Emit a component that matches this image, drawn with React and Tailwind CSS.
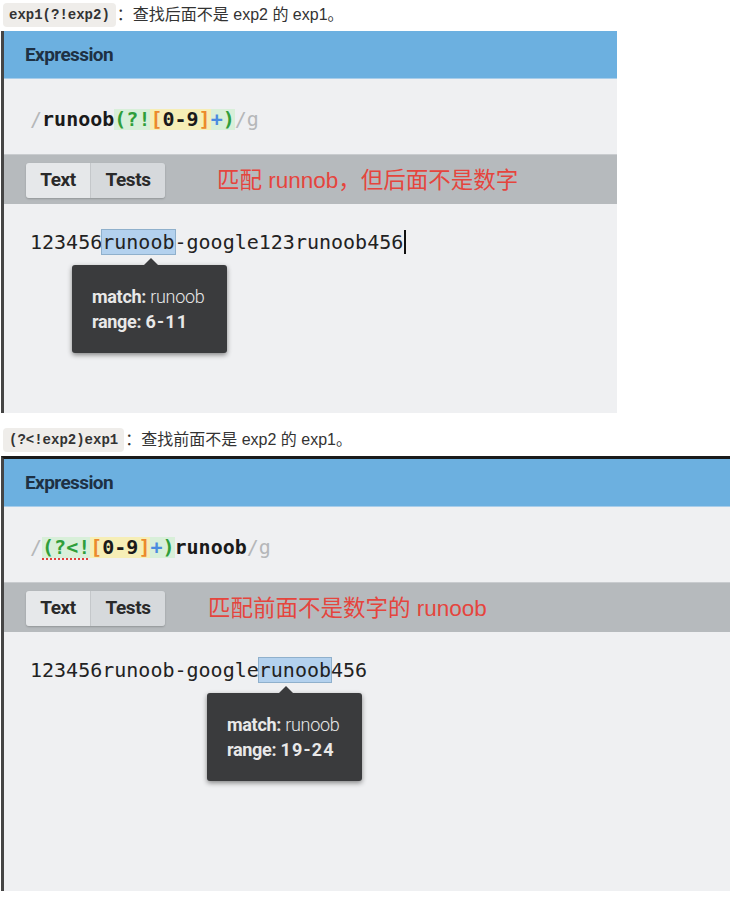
import React from "react";

const mono = "font-['DejaVu_Sans_Mono','Liberation_Mono',monospace]";
const ui = "font-['Roboto','Liberation_Sans',sans-serif]";
const cjk = "font-['Liberation_Sans','Noto_Sans_CJK_SC',sans-serif]";

function Intro({ code, text }) {
  return (
    <div className="flex items-center h-[24px]">
      <span className="bg-[#efedea] rounded-[4px] px-[6px] h-[24px] flex items-center text-[14px] font-bold text-[#333] font-['Liberation_Mono',monospace]">
        {code}
      </span>
      <span className={`${cjk} text-[16px] text-[#333] ml-[1px]`}>{text}</span>
    </div>
  );
}

function Tooltip({ left, range }) {
  return (
    <div
      className={`absolute top-[61px] w-[155px] h-[88px] bg-[#3a3b3d] rounded-[3px] shadow-[0_2px_5px_rgba(0,0,0,0.45)] ${ui} ${left}`}
    >
      <div className="absolute -top-[7px] left-[72px] w-0 h-0 border-l-[7px] border-r-[7px] border-b-[7px] border-l-transparent border-r-transparent border-b-[#3a3b3d]" />
      <div className="pl-[20px] pt-[19px] text-[18px] leading-[25px] text-[#e8e8e8] tracking-[-0.3px]">
        <div>
          <span className="font-bold">match:</span>{" "}
          <span className="font-light">runoob</span>
        </div>
        <div className="font-bold">
          range: <span className="tracking-[1.2px]">{range}</span>
        </div>
      </div>
    </div>
  );
}

function Shot({ width, height, topBorder, regex, note, text, tipLeft, range }) {
  return (
    <div
      className={`flex flex-col border-l-[3px] border-[#454545] ${topBorder ? "border-t-[3px] border-t-[#1a1a1a]" : ""} ${width} ${height}`}
    >
      <div className="h-[48px] bg-[#6cb0e0] border-b border-[#a8cdea] flex items-center pl-[21px] pt-[2px] shrink-0">
        <span className={`${ui} font-bold text-[19px] text-[#1e3144] tracking-[-0.6px]`}>
          Expression
        </span>
      </div>
      <div className="h-[75px] bg-[#eff0f2] flex items-center pl-[26px] pt-[5px] shrink-0">
        <div className={`${mono} font-bold text-[20px] leading-[21px] text-[#1a1a1a] flex`}>
          {regex}
        </div>
      </div>
      <div className="h-[50px] bg-[#b6babd] border-t border-[#c9cccf] flex items-center pl-[22px] pt-[2px] shrink-0">
        <div className="flex rounded-[3px] shadow-[0_1px_2px_rgba(0,0,0,0.2)] overflow-hidden">
          <div className={`w-[65px] h-[35px] bg-[#e6e8ea] flex items-center justify-center ${ui} font-bold text-[19px] text-[#2a2a2a] tracking-[-0.4px] border-r border-[#c4c7ca]`}>
            Text
          </div>
          <div className={`w-[74px] h-[35px] bg-[#d6d9dc] flex items-center justify-center ${ui} font-bold text-[19px] text-[#2a2a2a] tracking-[-0.4px]`}>
            Tests
          </div>
        </div>
        <span className={`${cjk} text-[22.5px] text-[#e5453d] ${note.ml}`}>{note.text}</span>
      </div>
      <div className="relative flex-1 bg-[#eff0f2] pl-[26px] pt-[26px]">
        <div className={`${mono} text-[20px] leading-[24px] text-[#222] flex`}>{text}</div>
        <Tooltip left={tipLeft} range={range} />
      </div>
    </div>
  );
}

const G = ({ children }) => <span className="text-[#2f9e3a]">{children}</span>;
const O = ({ children }) => <span className="text-[#ec8a2c]">{children}</span>;
const B = ({ children }) => <span className="text-[#4b8be0]">{children}</span>;
const Gray = ({ children }) => <span className="text-[#b5b7b9] font-normal">{children}</span>;
const Hl = ({ children }) => (
  <span className="bg-[#b3d1ee] outline outline-1 outline-[#8fb0cc]">{children}</span>
);

export default function App() {
  const regex1 = (
    <>
      <Gray>/</Gray>
      <span>runoob</span>
      <span className="bg-[#d8efd9] flex">
        <G>(?!</G>
        <span className="bg-[#f6eeb6] flex">
          <O>[</O>
          <span>0-9</span>
          <O>]</O>
        </span>
        <B>+</B>
        <G>)</G>
      </span>
      <Gray>/g</Gray>
    </>
  );
  const regex2 = (
    <>
      <Gray>/</Gray>
      <span className="bg-[#d8efd9] flex">
        <span className="text-[#2f9e3a] underline decoration-dotted decoration-[#e0403a] decoration-2 underline-offset-[5px]">
          (?&lt;!
        </span>
        <span className="bg-[#f6eeb6] flex">
          <O>[</O>
          <span>0-9</span>
          <O>]</O>
        </span>
        <B>+</B>
        <G>)</G>
      </span>
      <span>runoob</span>
      <Gray>/g</Gray>
    </>
  );

  return (
    <div className="w-[739px] h-[901px] bg-white overflow-hidden">
      <div className="pt-[3px] pl-[3px] h-[31px]">
        <Intro code="exp1(?!exp2)" text="：查找后面不是 exp2 的 exp1。" />
      </div>
      <div className="pl-[1px]">
        <Shot
          width="w-[616px]"
          height="h-[382px]"
          regex={regex1}
          note={{ text: "匹配 runnob，但后面不是数字", ml: "ml-[52px]" }}
          text={
            <>
              <span>123456</span>
              <Hl>runoob</Hl>
              <span>-google123runoob456</span>
              <span className="w-[1.5px] h-[24px] bg-[#111] ml-[1px]" />
            </>
          }
          tipLeft="left-[68px]"
          range="6-11"
        />
      </div>
      <div className="pt-[15px] pl-[3px] h-[43px]">
        <Intro code="(?<!exp2)exp1" text="：查找前面不是 exp2 的 exp1。" />
      </div>
      <div className="pl-[1px]">
        <Shot
          width="w-[729px]"
          height="h-[435px]"
          topBorder
          regex={regex2}
          note={{ text: "匹配前面不是数字的 runoob", ml: "ml-[43px]" }}
          text={
            <>
              <span>123456runoob-google</span>
              <Hl>runoob</Hl>
              <span>456</span>
            </>
          }
          tipLeft="left-[203px]"
          range="19-24"
        />
      </div>
    </div>
  );
}
